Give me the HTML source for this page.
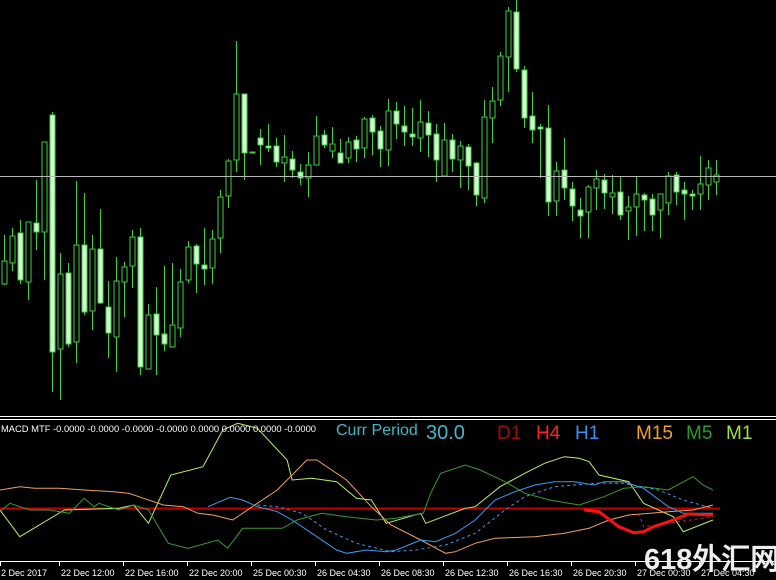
<!DOCTYPE html>
<html><head><meta charset="utf-8"><style>
html,body{margin:0;padding:0;background:#000;width:776px;height:580px;overflow:hidden}
svg{display:block}
text{font-family:"Liberation Sans",sans-serif}
</style></head><body>
<svg id="s" width="776" height="580" xmlns="http://www.w3.org/2000/svg">
<rect width="776" height="580" fill="#000"/>
<g id="c"></g>
<line x1="0" y1="176.5" x2="776" y2="176.5" stroke="#b8b8b8" stroke-width="1"/>
<line x1="0" y1="416.5" x2="776" y2="416.5" stroke="#fff" stroke-width="1"/>
<line x1="0" y1="419.5" x2="776" y2="419.5" stroke="#fff" stroke-width="1"/>
<line x1="0" y1="508.5" x2="720" y2="508.5" stroke="#c00000" stroke-width="2"/>
<g id="ind" fill="none" stroke-width="1"></g>
<text x="1" y="432" font-size="9" fill="#fff" textLength="315" lengthAdjust="spacingAndGlyphs">MACD MTF -0.0000 -0.0000 -0.0000 -0.0000 0.0000 0.0000 0.0000 -0.0000</text>
<text x="336" y="435" font-size="16" fill="#3fb8c8">Curr Period</text>
<text x="426" y="439" font-size="20" fill="#3fb8c8">30.0</text>
<text x="497" y="439" font-size="19" fill="#9a1010">D1</text>
<text x="536" y="439" font-size="19" fill="#ff2020">H4</text>
<text x="575" y="439" font-size="19" fill="#3d8ff0">H1</text>
<text x="636" y="439" font-size="19" fill="#f0a030">M15</text>
<text x="686" y="439" font-size="19" fill="#2e9a2e">M5</text>
<text x="726" y="439" font-size="19" fill="#9fe040">M1</text>
<line x1="0" y1="561.5" x2="776" y2="561.5" stroke="#fff" stroke-width="1"/>
<g id="ax" font-size="9" fill="#fff"></g>
<text x="644" y="569" font-size="29" font-weight="bold" fill="#eee" font-family="'Liberation Sans','Noto Sans CJK SC',sans-serif">618外汇网</text>
</svg>
<script>
var NS="http://www.w3.org/2000/svg";
function el(p,t,a){var e=document.createElementNS(NS,t);for(var k in a)e.setAttribute(k,a[k]);p.appendChild(e);return e;}
var d=[[4,261,284,235,285,0],[12,236,263,228,271,0],[20,233,280,220,284,1],[28,222,282,222,300,0],[36,223,232,180,250,1],[44,142,232,142,280,0],[52,115,352,112,392,1],[60,274,349,253,400,0],[68,273,344,263,347,1],[76,245,342,181,363,0],[84,245,312,193,315,1],[92,249,311,235,330,0],[100,249,303,209,304,1],[108,307,333,281,358,1],[116,281,337,257,372,0],[124,267,282,262,317,0],[132,237,266,230,288,0],[140,237,367,228,375,1],[148,315,369,304,369,0],[156,314,335,287,375,1],[164,334,344,266,351,1],[172,325,347,263,347,0],[180,282,328,269,337,0],[188,247,280,241,283,0],[196,246,264,244,293,1],[204,265,269,228,285,1],[212,239,268,230,284,0],[220,197,238,190,253,0],[228,161,196,159,208,0],[236,94,160,41,172,0],[244,94,153,94,180,1],[252,152,153,152,153,1],[260,138,145,129,165,1],[268,146,148,124,152,1],[276,146,162,138,167,1],[284,157,163,135,182,0],[292,159,170,151,178,1],[300,172,178,164,185,1],[308,165,178,152,197,0],[316,136,165,116,165,0],[324,135,145,130,148,1],[332,144,151,127,158,0],[340,153,163,139,162,1],[348,142,158,137,163,0],[356,140,149,136,162,1],[364,119,148,117,158,0],[372,118,132,115,155,1],[380,131,149,126,167,1],[388,111,150,99,166,0],[396,111,124,102,139,1],[404,126,132,106,146,1],[412,134,137,108,146,1],[420,122,138,100,152,0],[428,123,135,111,157,1],[436,134,160,124,182,1],[444,140,176,123,176,0],[452,140,159,134,172,1],[460,146,160,141,188,0],[468,147,166,144,190,1],[476,163,195,162,206,1],[484,117,198,100,203,0],[492,101,118,87,143,0],[500,56,100,52,106,0],[508,11,57,7,92,0],[516,12,69,0,72,1],[524,70,118,66,128,1],[532,116,130,92,143,1],[540,127,129,124,178,1],[548,128,202,105,216,1],[556,171,201,162,216,0],[564,170,188,138,200,1],[572,189,206,182,221,1],[580,210,216,198,238,1],[588,187,212,185,238,0],[596,179,188,170,210,0],[604,180,193,174,209,1],[612,193,197,175,214,0],[620,192,215,176,220,1],[628,207,211,196,240,0],[636,194,207,176,236,0],[644,195,200,193,231,1],[652,199,215,194,231,1],[660,194,210,194,238,0],[668,176,203,172,215,0],[676,175,192,172,205,1],[684,190,194,182,220,1],[692,194,196,190,210,1],[700,184,194,156,210,0],[708,168,185,160,200,0],[716,175,182,160,195,0]];
var g=document.getElementById("c");
d.forEach(function(c){
 el(g,"line",{x1:c[0]+.5,y1:c[3],x2:c[0]+.5,y2:c[4],stroke:"#3fcf3f","stroke-width":1});
 el(g,"rect",{x:c[0]-2,y:c[1],width:5,height:Math.max(1,c[2]-c[1]),fill:c[5]?"#d4ffd4":"#000",stroke:"#3fcf3f","stroke-width":1});
});
var ind=document.getElementById("ind");
function pl(pts,col,w,dash){var s=pts.map(function(p){return (p[0]/2.02).toFixed(1)+","+(410+p[1]/3).toFixed(1)}).join(" ");var a={points:s,stroke:col,"stroke-width":w||1};if(dash)a["stroke-dasharray"]=dash;el(ind,"polyline",a);}
pl([[0,300],[40,380],[130,300],[240,295],[270,285],[300,340],[345,195],[410,170],[450,60],[480,40],[520,55],[580,150],[590,210],[630,205],[680,215],[720,265],[750,270],[780,340],[850,310],[860,340],[940,295],[960,290],[1010,230],[1060,190],[1100,160],[1140,140],[1170,145],[1190,155],[1210,195],[1270,215],[1300,280],[1360,320],[1380,365],[1440,330]],"#b8f060");
pl([[0,240],[40,230],[70,235],[120,235],[170,240],[230,245],[260,250],[290,265],[330,285],[370,290],[400,310],[430,315],[470,330],[520,280],[560,240],[590,195],[620,150],[640,150],[700,210],[750,290],[790,345],[850,390],[900,430],[920,425],[960,400],[1000,385],[1080,380],[1140,370],[1190,355],[1230,330],[1270,315],[1350,305],[1400,300],[1440,285]],"#f0a060");
pl([[0,305],[20,280],[60,300],[100,300],[140,310],[170,265],[190,290],[200,280],[240,300],[270,285],[300,300],[340,400],[380,415],[440,390],[460,415],[490,355],[570,355],[600,330],[650,310],[700,320],[760,330],[800,325],[855,310],[870,250],[890,190],[940,165],[970,180],[1020,215],[1060,250],[1110,270],[1170,285],[1220,260],[1260,235],[1300,230],[1350,240],[1400,200],[1420,225],[1440,240]],"#3a9a30");
pl([[420,290],[465,262],[490,270],[520,290],[560,305],[590,330],[630,370],[680,420],[700,430],[740,420],[780,425],[800,420],[850,390],[880,395],[920,370],[960,330],[1000,270],[1040,245],[1080,225],[1120,215],[1160,215],[1200,225],[1220,215],[1260,215],[1300,235],[1350,290],[1380,310],[1440,310]],"#3b9cef");
pl([[520,285],[560,290],[610,310],[660,360],[720,400],[790,425],[840,420],[900,405],[960,370],[1020,300],[1060,260],[1120,230],[1200,220],[1260,220],[1330,240],[1380,270],[1440,295]],"#3b9cef",1,"3,3");
pl([[1290,310],[1300,350],[1350,340],[1440,320]],"#e02020",1,"3,3");
pl([[1180,300],[1210,305],[1250,350],[1280,368],[1300,365],[1320,350],[1360,330],[1390,312],[1440,315]],"#ff1010",3);
var ax=document.getElementById("ax");
var lb=["2 Dec 2017","22 Dec 12:00","22 Dec 16:00","22 Dec 20:00","25 Dec 00:30","26 Dec 04:30","26 Dec 08:30","26 Dec 12:30","26 Dec 16:30","26 Dec 20:30","27 Dec 00:30","27 Dec 04:30"];
lb.forEach(function(t,i){var x=i==0?0:59+64*(i-1);el(ax,"line",{x1:x+.5,y1:561,x2:x+.5,y2:566,stroke:"#fff"});var e=el(ax,"text",{x:i==0?1:x+2,y:576});e.textContent=t;});
</script>
</body></html>
